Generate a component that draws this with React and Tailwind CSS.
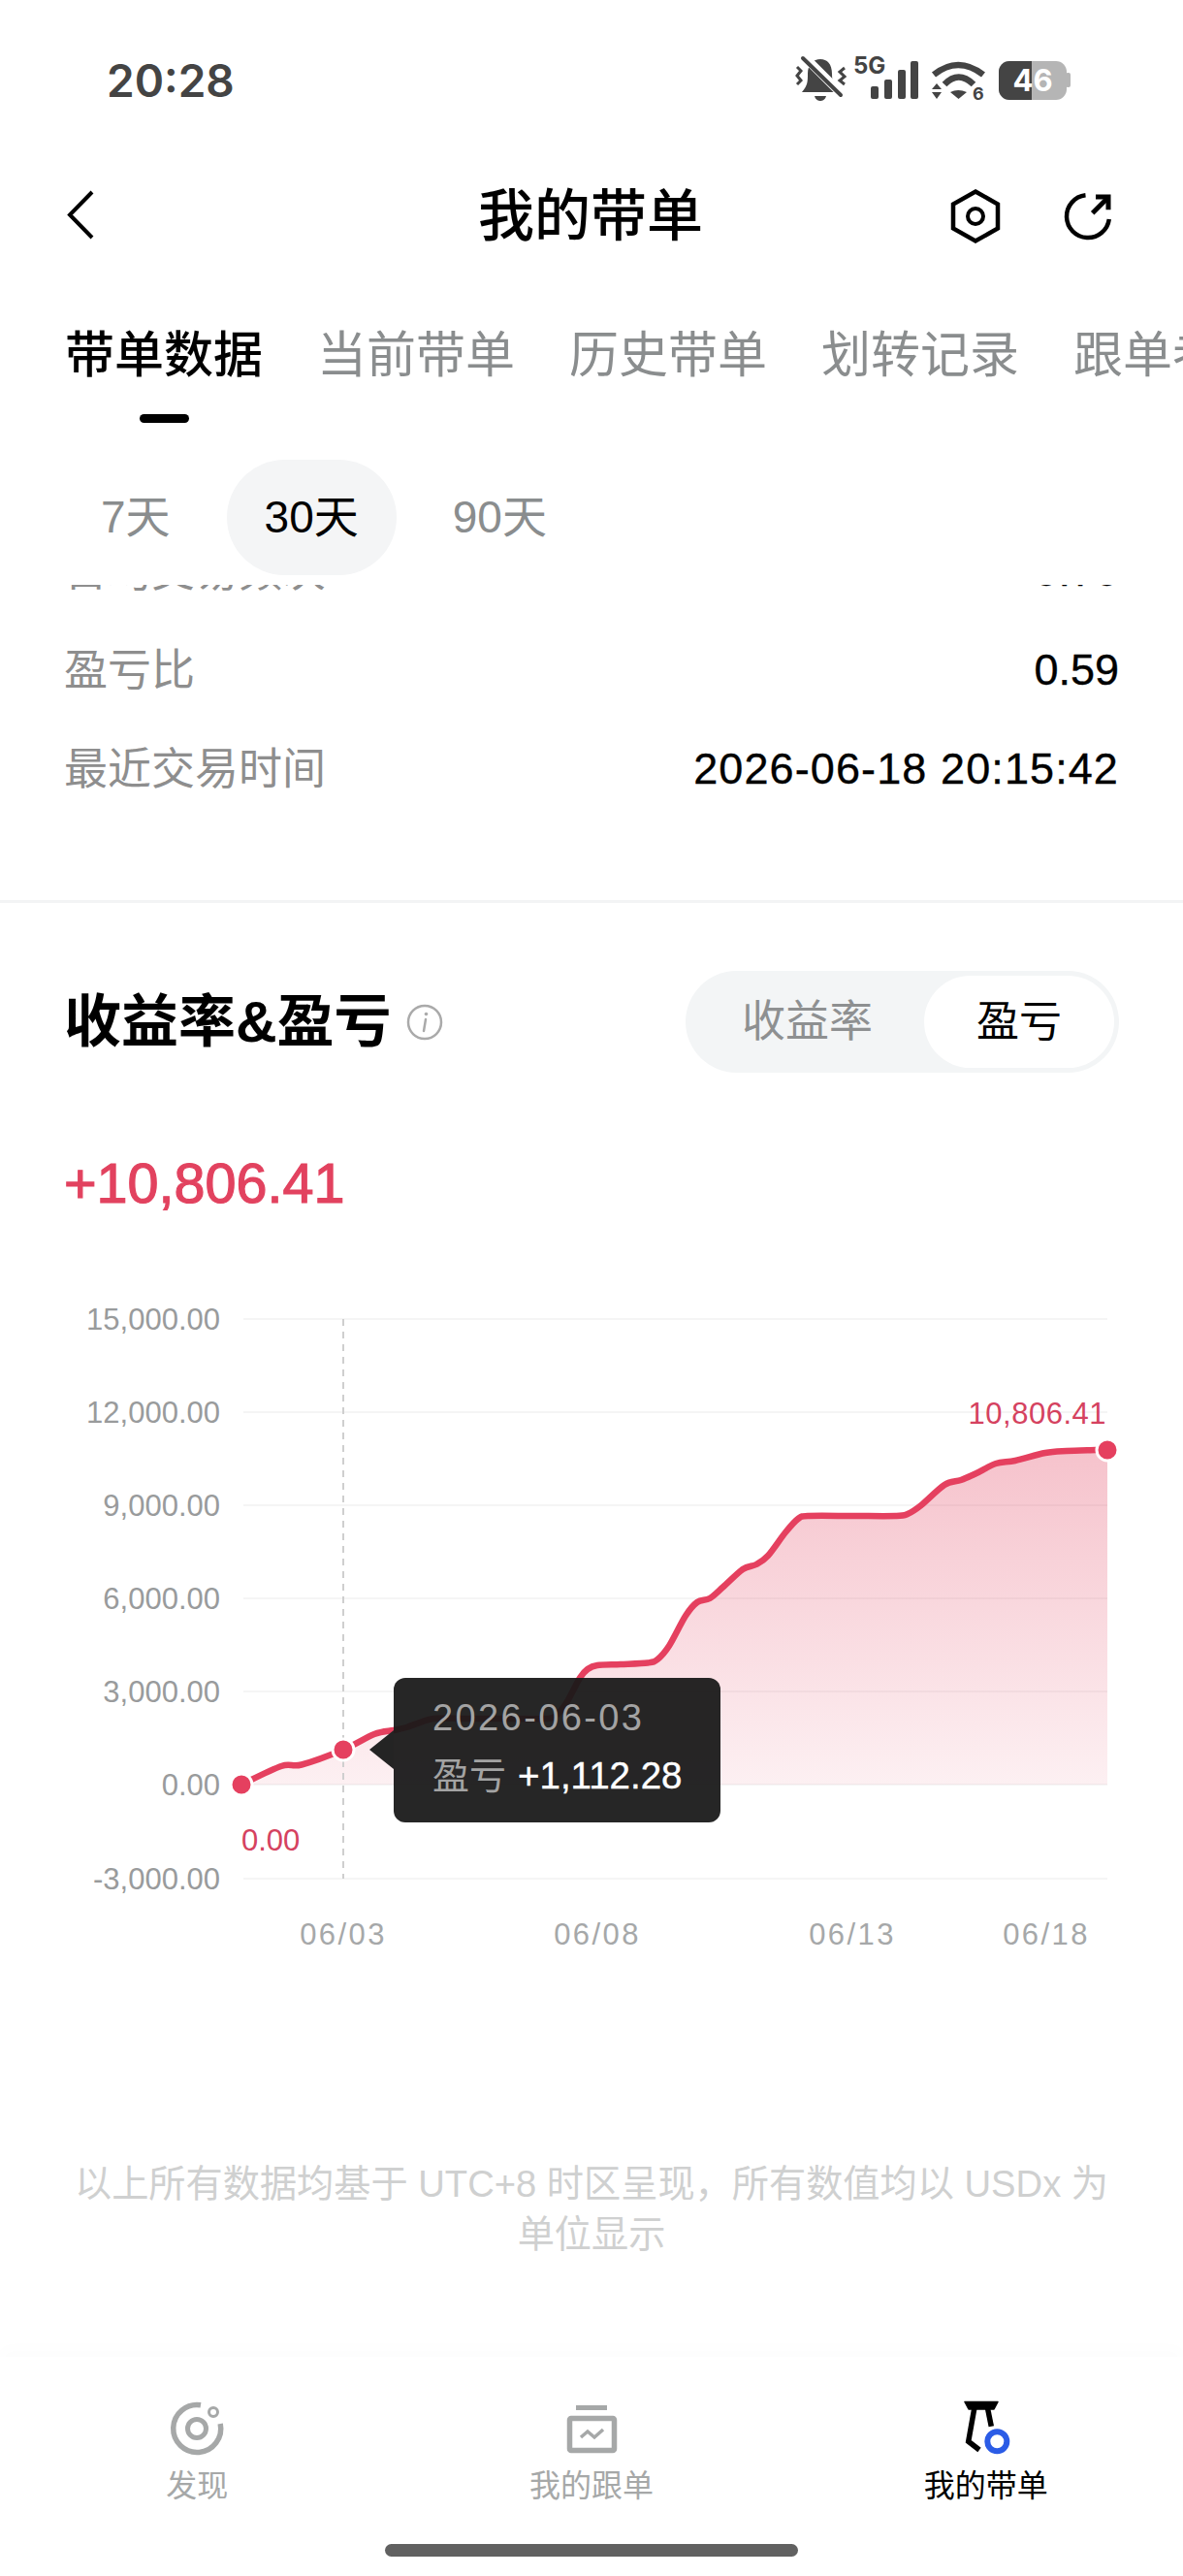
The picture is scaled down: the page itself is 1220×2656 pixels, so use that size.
import React from "react";

const pts = [
  [249,1840],[290,1821],[311,1819.5],[354,1804],[386,1788],[406,1784],[419,1781],[447,1772],[480,1772],[520,1772],[560,1772],[572,1770],[584,1756],[598,1730],[606,1721],[616,1717],[640,1716],[668,1714.5],[678,1711],[690,1697],[707,1666],[719,1652],[732,1648],[746,1636],[766,1618],[780,1613],[792,1604],[810,1580],[823,1566],[834,1563],[880,1563],[924,1563],[936,1561],[950,1552],[974,1531],[991,1526],[1007,1519],[1027,1509],[1047,1506],[1078,1498],[1100,1496],[1130,1495],[1142,1494.5],
];

function smooth(p) {
  let d = `M${p[0][0]} ${p[0][1]}`;
  for (let i = 0; i < p.length - 1; i++) {
    const a = p[Math.max(i - 1, 0)], b = p[i], c = p[i + 1], e = p[Math.min(i + 2, p.length - 1)];
    const t = 0.16;
    d += ` C${b[0] + (c[0] - a[0]) * t} ${b[1] + (c[1] - a[1]) * t} ${c[0] - (e[0] - b[0]) * t} ${c[1] - (e[1] - b[1]) * t} ${c[0]} ${c[1]}`;
  }
  return d;
}
const linePath = smooth(pts);
const areaPath = `${linePath} L1142 1840 L249 1840 Z`;

const grid = [
  [1360, "15,000.00"], [1456, "12,000.00"], [1552, "9,000.00"], [1648, "6,000.00"], [1744, "3,000.00"], [1840, "0.00"], [1937, "-3,000.00"],
];
const xLabels = [[354, "06/03"], [616, "06/08"], [879, "06/13"], [1079, "06/18"]];

function StatusIcons() {
  return (
    <svg width="300" height="60" viewBox="810 53 300 60" className="block">
      <path d="M827 95C833 88 833 84 833 76C833 66 839 61 846 61C853 61 858 66 858 76C858 84 860 90 864 95Z" fill="#444" />
      <path d="M840 99H852C851 103 848 104 846 104C844 104 841 103 840 99Z" fill="#444" />
      <path d="M831 60L869 98" stroke="#fff" strokeWidth="9" />
      <path d="M828 60L867 98" stroke="#444" strokeWidth="4" strokeLinecap="round" />
      <path d="M822 69L826 73L822 78L826 83L822 87" stroke="#444" strokeWidth="3" fill="none" />
      <path d="M871 70L866 74L871 79L866 83L871 87" stroke="#444" strokeWidth="3" fill="none" />
      <text x="880" y="76" fill="#444" className="text-[24px] font-bold font-['Inter',sans-serif]">5G</text>
      <rect x="898" y="89" width="8" height="13" rx="2" fill="#444" />
      <rect x="912" y="82" width="8" height="20" rx="2" fill="#444" />
      <rect x="926" y="72" width="8" height="30" rx="2" fill="#444" />
      <rect x="939" y="63" width="8" height="39" rx="2" fill="#444" />
      <path d="M963 77Q988 57 1014 77" stroke="#444" strokeWidth="6.5" fill="none" />
      <path d="M974 87Q988.5 72 1004 87" stroke="#444" strokeWidth="6.5" fill="none" />
      <path d="M980 95Q988 91 997 95L988.5 102Z" fill="#444" />
      <path d="M961 92L971 92L966 86Z M961 95L971 95L966 102Z" fill="#444" />
      <text x="1003" y="103" fill="#444" className="text-[18px] font-bold font-['Inter',sans-serif]">6</text>
      <rect x="1030" y="63" width="70" height="40" rx="11" fill="#b5b5b5" />
      <rect x="1099" y="75" width="5" height="15" rx="2" fill="#b5b5b5" />
      <path d="M1064 63H1041A11 11 0 0 0 1030 74V92A11 11 0 0 0 1041 103H1064Z" fill="#444" />
      <text x="1065" y="94" textAnchor="middle" fill="#fff" className="text-[31px] font-bold font-['Inter',sans-serif]">46</text>
    </svg>
  );
}

function Row({ label, value, wide }) {
  return (
    <div className="flex h-[102px] items-center justify-between">
      <span className="relative top-[1px] text-[45px] leading-[60px] text-[#8e8e8e]">{label}</span>
      <span className={wide ? "text-[45px] leading-[60px] tracking-[1.1px] text-black [-webkit-text-stroke:0.35px_#000]" : "text-[45px] leading-[60px] text-black [-webkit-text-stroke:0.35px_#000]"}>{value}</span>
    </div>
  );
}

function NavItem({ label, active, children }) {
  return (
    <div className="flex flex-col items-center">
      {children}
      <span className={active ? "mt-[9px] text-[32px] leading-[40px] text-black" : "mt-[9px] text-[32px] leading-[40px] text-[#a6a8a8]"}>{label}</span>
    </div>
  );
}

export default function App() {
  return (
    <div className="relative flex h-[2656px] w-[1220px] flex-col overflow-hidden bg-white font-['Liberation_Sans','Noto_Sans_CJK_SC',sans-serif]">
      {/* status bar */}
      <div className="flex h-[166px] shrink-0 items-center justify-between pl-[110px] pr-[110px]">
        <span className="font-['Inter',sans-serif] text-[46px] font-semibold text-[#444]">20:28</span>
        <StatusIcons />
      </div>

      {/* nav */}
      <div className="grid h-[114px] shrink-0 grid-cols-3 items-center pl-[68px] pr-[70px]">
        <svg width="30" height="54" viewBox="68 196 30 54" className="block">
          <path d="M95 198L72 221.5L95 245" stroke="#000" strokeWidth="4" fill="none" />
        </svg>
        <div className="text-center text-[58px] font-medium leading-[70px] text-black">我的带单</div>
        <div className="flex items-center justify-end gap-[60px]">
          <svg width="56" height="60" viewBox="978 193 56 60" className="block">
            <path d="M1006 197.5L1029 210.5V235.5L1006 248.5L983 235.5V210.5Z" fill="none" stroke="#000" strokeWidth="4.5" />
            <circle cx="1006" cy="223" r="8" fill="none" stroke="#000" strokeWidth="4" />
          </svg>
          <svg width="56" height="60" viewBox="1094 195 56 60" className="block">
            <path d="M1119.5 203.2A22 22 0 1 0 1143.8 228" fill="none" stroke="#000" strokeWidth="4.5" />
            <path d="M1126.7 221.7L1141.7 206.7" stroke="#000" strokeWidth="5" />
            <path d="M1130 205H1143V218.3" fill="none" stroke="#000" strokeWidth="5" />
          </svg>
        </div>
      </div>

      {/* tabs */}
      <div className="flex h-[160px] shrink-0 gap-[56px] overflow-hidden pl-[67px] pt-[57px] whitespace-nowrap text-[51px] leading-[60px] text-[#8a8d8e]">
        <div className="flex shrink-0 flex-col items-center">
          <span className="font-medium text-black">带单数据</span>
          <span className="mt-[30px] h-[9px] w-[51px] rounded-full bg-black" />
        </div>
        <span className="shrink-0">当前带单</span>
        <span className="shrink-0">历史带单</span>
        <span className="shrink-0">划转记录</span>
        <span className="shrink-0">跟单者</span>
      </div>

      {/* period */}
      <div className="flex h-[163px] shrink-0 items-start gap-[19px] pl-[65px] pt-[34px] pb-[10px] text-[46px] text-[#8a8d8e]">
        <div className="flex h-[119px] items-center rounded-full px-[39px]">7天</div>
        <div className="flex h-[119px] items-center rounded-full bg-[#f4f5f6] px-[39px] text-black">30天</div>
        <div className="flex h-[119px] items-center rounded-full px-[39px]">90天</div>
      </div>

      {/* scrolling content */}
      <div className="min-h-0 flex-1 overflow-hidden">
        <div className="-mt-[65px] pl-[66px] pr-[66px] pb-[84px]">
          <Row label="日均交易频次" value="0.70" />
          <Row label="盈亏比" value="0.59" />
          <Row label="最近交易时间" value="2026-06-18 20:15:42" wide />
        </div>
        <div className="h-[3px] bg-[#f3f4f5]" />

        <div className="flex items-center justify-between pl-[66px] pr-[66px] pt-[70px]">
          <div className="flex items-center gap-[15px]">
            <span className="text-[59px] font-bold leading-[70px] text-black">收益率&amp;盈亏</span>
            <svg width="38" height="38" viewBox="0 0 38 38" className="block">
              <circle cx="19" cy="19" r="17" fill="none" stroke="#aaa" strokeWidth="2.5" />
              <path d="M20 16L18 28" stroke="#aaa" strokeWidth="2.5" strokeLinecap="round" />
              <circle cx="20.5" cy="10.5" r="1.8" fill="#aaa" />
            </svg>
          </div>
          <div className="flex h-[105px] w-[447px] items-center rounded-full bg-[#f3f5f6] p-[5px]">
            <div className="flex-1 text-center text-[45px] text-[#8e9091]">收益率</div>
            <div className="flex h-[95px] w-[196px] items-center justify-center rounded-full bg-white text-[44px] text-black">盈亏</div>
          </div>
        </div>

        <div className="mt-[81px] h-[66px] pl-[66px] text-[57.5px] leading-[66px] text-[#e2425f] [-webkit-text-stroke:1.2px_#e2425f]">+10,806.41</div>

        {/* chart */}
        <div className="relative mt-[87px] h-[680px]">
          <svg width="1220" height="680" viewBox="0 1340 1220 680" className="block">
            <defs>
              <linearGradient id="area" gradientUnits="userSpaceOnUse" x1="0" y1="1495" x2="0" y2="1840">
                <stop offset="0" stopColor="#e2425f" stopOpacity="0.32" />
                <stop offset="1" stopColor="#e2425f" stopOpacity="0.08" />
              </linearGradient>
            </defs>
            {grid.map(([y, t]) => (
              <g key={t}>
                <line x1="251" x2="1142" y1={y} y2={y} stroke="#f5f5f5" strokeWidth="2" />
                <text x="227" y={y + 11} textAnchor="end" fill="#999b9c" className="text-[31px]">{t}</text>
              </g>
            ))}
            <path d={areaPath} fill="url(#area)" />
            <line x1="354" x2="354" y1="1360" y2="1937" stroke="#cfcfcf" strokeWidth="2" strokeDasharray="7 6" />
            <path d={linePath} fill="none" stroke="#e5405f" strokeWidth="6.5" strokeLinejoin="round" />
            <circle cx="249" cy="1840" r="11" fill="#e5405f" stroke="#fff" strokeWidth="3" />
            <circle cx="354" cy="1804" r="11" fill="#e5405f" stroke="#fff" strokeWidth="3" />
            <circle cx="1142" cy="1495" r="11" fill="#e5405f" stroke="#fff" strokeWidth="3" />
            <text x="249" y="1908" fill="#d5425f" className="text-[31px]">0.00</text>
            <text x="1141" y="1468" textAnchor="end" fill="#d5425f" className="text-[31px] tracking-[0.5px]">10,806.41</text>
            {xLabels.map(([x, t]) => (
              <text key={t} x={x} y="2005" textAnchor="middle" fill="#a6a8a9" className="text-[31px] tracking-[2.4px]">{t}</text>
            ))}
          </svg>
          {/* tooltip */}
          <div className="absolute left-[406px] top-[390px] h-[149px] w-[337px] rounded-[12px] bg-[#181818]/94 pl-[40px] pt-[11px]">
            <span className="absolute -left-[25px] top-[54px] h-0 w-0 border-y-[20px] border-r-[25px] border-y-transparent border-r-[#242424]" />
            <div className="h-[60px] text-[38px] leading-[60px] tracking-[2.4px] text-[#a3a3a3]">2026-06-03</div>
            <div className="flex h-[60px] items-center gap-[12px] text-[38px] leading-[60px]">
              <span className="text-[#a3a3a3]">盈亏</span>
              <span className="text-[38.5px] text-white [-webkit-text-stroke:0.4px_#fff]">+1,112.28</span>
            </div>
          </div>
        </div>

        <div className="mt-[206px] px-[68px] text-center text-[38.2px] leading-[52px] text-[#cfd0d0]">
          以上所有数据均基于 UTC+8 时区呈现，所有数值均以 USDx 为单位显示
        </div>
      </div>

      {/* bottom nav */}
      <div className="h-[226px] shrink-0 bg-white pt-[44px] shadow-[0_-10px_16px_rgba(0,0,0,0.012)]">
        <div className="grid grid-cols-3">
          <NavItem label="发现">
            <svg width="80" height="60" viewBox="0 0 80 60" className="block">
              <path d="M44 5.8A24.5 24.5 0 1 0 64.2 25" fill="none" stroke="#a6a8a8" strokeWidth="5.5" />
              <circle cx="40" cy="30" r="9.5" fill="none" stroke="#a6a8a8" strokeWidth="5" />
              <circle cx="57" cy="13" r="4.5" fill="none" stroke="#a6a8a8" strokeWidth="3" />
            </svg>
          </NavItem>
          <NavItem label="我的跟单">
            <svg width="80" height="60" viewBox="0 0 80 60" className="block">
              <rect x="24" y="6" width="32" height="5" fill="#a6a8a8" />
              <rect x="17.5" y="19.5" width="46" height="33" rx="1.5" fill="none" stroke="#a6a8a8" strokeWidth="5.5" />
              <path d="M29 39L36 33L43 39L52 31" fill="none" stroke="#a6a8a8" strokeWidth="3.5" />
            </svg>
          </NavItem>
          <NavItem label="我的带单" active>
            <svg width="80" height="60" viewBox="0 0 80 60" className="block">
              <path d="M18 2.5H52L48 10H22Z" fill="#000" strokeLinejoin="round" stroke="#000" strokeWidth="1.5" />
              <path d="M28 8L21.7 43.3L33 52" fill="none" stroke="#000" strokeWidth="5.5" />
              <path d="M41.3 8L45.3 27.7" fill="none" stroke="#000" strokeWidth="5.5" />
              <circle cx="51.3" cy="43.3" r="10" fill="#fff" stroke="#2b5ce6" strokeWidth="6" />
            </svg>
          </NavItem>
        </div>
        <div className="mx-auto mt-[40px] h-[13px] w-[426px] rounded-full bg-[#616161]" />
      </div>
    </div>
  );
}
